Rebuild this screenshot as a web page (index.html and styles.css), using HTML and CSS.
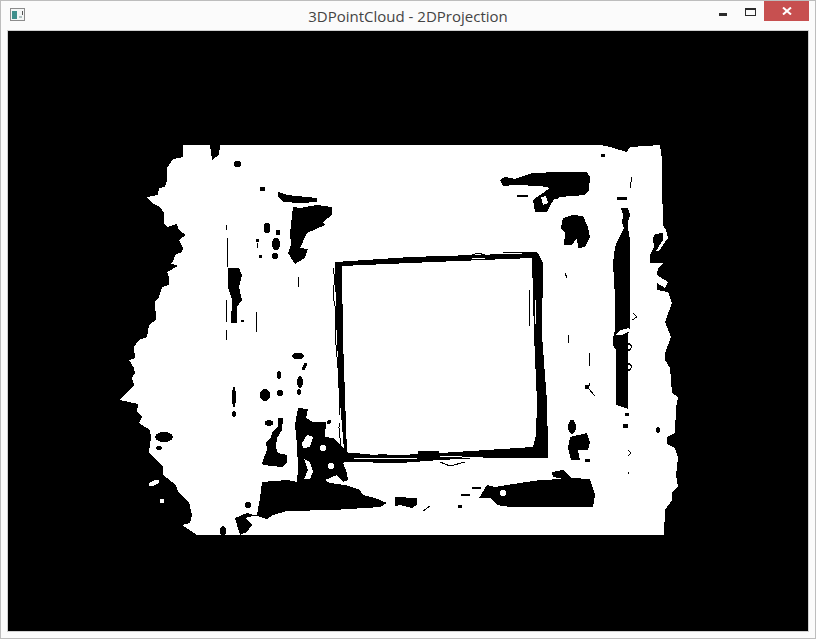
FILE: index.html
```html
<!DOCTYPE html>
<html lang="en">
<head>
    <meta charset="UTF-8">
    <meta name="viewport" content="width=device-width, initial-scale=1.0">
    <title>3DPointCloud - 2DProjection</title>
    <link rel="stylesheet" href="styles.css">
</head>
<body>
    <div class="window">
        <div class="titlebar">
            <svg class="app-icon" width="16" height="14" viewBox="0 0 16 14">
                <rect x="0.5" y="0.5" width="14" height="12" fill="#f4f6f6" stroke="#8c8c8c"/>
                <rect x="2" y="3" width="5" height="8" fill="#3f8f8c"/>
                <rect x="9" y="8" width="3" height="2" fill="#b5c4c4"/>
                <rect x="12" y="3" width="1" height="4" fill="#555"/>
            </svg>
            <div class="title">3DPointCloud - 2DProjection</div>
            <div class="controls">
                <div class="btn-min"></div>
                <div class="btn-max"></div>
                <div class="btn-close">
                    <svg width="10" height="8" viewBox="0 0 10 8">
                        <path d="M1 0.5 L9 7.5 M9 0.5 L1 7.5" stroke="#fff" stroke-width="2" fill="none"/>
                    </svg>
                </div>
            </div>
        </div>
        <div class="canvas-wrap">
            <!-- drawn in screen coordinates so it lines up with the capture -->
            <svg class="projection" width="800" height="600" viewBox="8 31 800 600">
                <rect class="bg" x="8" y="31" width="800" height="600"/>
                <!-- point cloud outline -->
                <polygon class="on" points="183,145 183,157 173,159 167,168 167,180 165,187 159,188 158,195 147,197 152,203 160,207 164,213 164,223 167,227 177,224 179,230 186,235 179,240 183,248 182,252 175,255 173,262 170,263 178,266 167,272 169,277 169,285 162,287 159,297 155,302 156,320 149,325 147,337 139,340 134,347 135,358 129,360 134,368 135,373 132,378 134,385 120,400 138,404 137,412 142,417 139,423 150,430 151,438 149,452 163,467 163,475 176,485 178,492 189,502 192,515 190,523 182,525 197,535 664,535 665,510 672,500 672,492 678,487 676,475 678,458 675,448 667,444 667,437 675,433 676,408 678,397 672,393 670,368 665,360 665,353 671,337 665,322 672,303 668,292 657,290 657,283 665,288 668,282 657,275 658,268 663,263 650,263 650,255 654,247 653,238 655,234 663,233 663,240 656,251 659,251 663,245 668,238 666,230 663,225 663,217 662,190 662,160 660,145 630,147 627,152 610,147 600,145"/>
                <circle class="on" cx="162" cy="501" r="2.5"/>
                <ellipse class="on" cx="154" cy="483" rx="6" ry="2.5" transform="rotate(-25 154 483)"/>

                <!-- square frame in the middle -->
                <path class="off" fill-rule="evenodd" d="M335 262 L410 257 L538 253 L543 263 L542 335 L547 402 L548 448 L548 458 L480 458 L440 460 L400 463 L345 462 L340 402 L336 320 Z M342 266 L410 263 L532 258 L534 335 L537 402 L536 435 L533 447 L440 453 L400 455 L347 453 L343 340 Z"/>
                <rect class="off" x="418" y="451" width="21" height="9"/>

                <!-- holes, top left -->
                <polygon class="off" points="210,145 220,145 219,155 212,160"/>
                <ellipse class="off" cx="237.5" cy="164" rx="4" ry="3"/>
                <rect class="off" x="260" y="187" width="5" height="4"/>
                <polygon class="off" points="278,192 287,195 317,198 317,202 300,203 283,202 278,197"/>
                <polygon class="off" points="293,207 300,208 317,205 332,207 332,215 323,222 325,225 307,233 300,248 308,249 305,258 295,264 288,253 291,245 290,233"/>
                <ellipse class="off" cx="267" cy="228" rx="3.5" ry="5.5"/>
                <rect class="off" x="276" y="230" width="4" height="5"/>
                <rect class="off" x="256" y="239" width="3" height="3"/>
                <ellipse class="off" cx="276" cy="244" rx="4" ry="6"/>
                <rect class="off" x="259" y="255" width="3" height="3"/>
                <ellipse class="off" cx="275" cy="256" rx="3" ry="3"/>
                <polygon class="off" points="228,268 239,268 242,275 239,287 242,300 237,307 237,323 231,323 232,300 228,287"/>
                <rect class="off" x="241" y="320" width="3" height="2"/>

                <!-- holes, top right -->
                <polygon class="off" points="500,180 505,177 515,179 532,173 560,172 587,172 590,177 589,190 585,195 560,197 552,202 547,212 535,212 533,200 540,195 550,188 540,186 515,185 503,186"/>
                <polygon class="on" points="541,197 546,196 548,203 543,205"/>
                <circle class="on" cx="555" cy="201" r="2"/>
                <rect class="off" x="517" y="195" width="11" height="2"/>
                <rect class="off" x="601" y="154" width="4" height="3"/>
                <rect class="off" x="617" y="197" width="10" height="3"/>
                <polygon class="off" points="563,218 573,215 583,216 588,227 590,237 585,247 578,248 577,238 572,245 564,245 565,233 561,228"/>
                <polygon class="off" points="621,208 628,208 630,215 628,222 628,228 630,240 630,327 628,335 628,409 616,405 616,350 613,345 613,338 615,330 615,297 613,263 615,247 618,240 624,228 622,223 623,215"/>
                <polygon class="on" points="615,335 621,330 629,328 630,331 622,335"/>
                <rect class="off" x="625" y="413" width="4" height="3"/>
                <rect class="off" x="623" y="424" width="5" height="4"/>
                <ellipse class="off" cx="658" cy="430" rx="2" ry="3"/>

                <!-- holes, bottom left -->
                <ellipse class="off" cx="298" cy="356" rx="6" ry="3.5"/>
                <line class="off-line thick" x1="306" y1="363" x2="303" y2="370"/>
                <ellipse class="off" cx="300" cy="382" rx="3" ry="6"/>
                <ellipse class="off" cx="299" cy="392" rx="2" ry="3"/>
                <ellipse class="off" cx="279" cy="375" rx="2" ry="4"/>
                <ellipse class="off" cx="280" cy="393" rx="3" ry="3"/>
                <ellipse class="off" cx="265" cy="395" rx="5" ry="6"/>
                <ellipse class="off" cx="234" cy="397" rx="2" ry="10"/>
                <ellipse class="off" cx="234" cy="414" rx="2" ry="3"/>
                <ellipse class="off" cx="269" cy="423" rx="4" ry="3"/>
                <polygon class="off" points="278,418 283,418 282,430 277,438 276,447 278,453 287,455 287,463 282,467 263,465 262,463 267,450 266,442 271,438 272,432 278,427"/>
                <ellipse class="off" cx="164" cy="437" rx="9" ry="5"/>
                <ellipse class="off" cx="159" cy="448" rx="3" ry="2"/>
                <polygon class="off" points="298,408 308,409 306,418 313,422 326,422 325,437 333,438 347,452 354,457 343,463 347,473 348,480 343,482 337,475 325,480 330,483 345,485 360,490 363,495 375,498 387,503 380,507 365,508 333,510 287,511 273,515 267,519 247,513 235,518 240,535 247,532 252,525 245,518 257,515 260,498 262,482 287,480 297,482 298,468 297,445 295,425"/>
                <polygon class="on" points="302,443 307,435 313,437 310,447 303,448"/>
                <circle class="on" cx="323" cy="448" r="3"/>
                <polygon class="on" points="304,459 310,462 313,472 310,479 304,479 308,470"/>
                <circle class="on" cx="331" cy="466" r="3"/>
                <circle class="off" cx="329" cy="422" r="2"/>
                <circle class="off" cx="248" cy="505" r="3"/>
                <ellipse class="off" cx="223" cy="531" rx="3" ry="5"/>
                <polygon class="off" points="395,497 417,498 417,505 412,508 400,505 395,506"/>

                <!-- holes, bottom right -->
                <circle class="off" cx="587" cy="387" r="2.5"/>
                <ellipse class="off" cx="572" cy="427" rx="4" ry="7"/>
                <polygon class="off" points="570,437 587,433 590,442 588,450 578,450 580,460 571,460 568,448"/>
                <rect class="off" x="585" y="459" width="5" height="3"/>
                <polygon class="off" points="552,472 563,470 572,478 590,479 595,495 593,507 510,507 497,505 490,498 479,498 487,485 495,487 507,485 540,480 563,479 553,477"/>
                <circle class="on" cx="503" cy="493" r="3"/>
                <rect class="off" x="472" y="487" width="9" height="2"/>
                <rect class="off" x="461" y="494" width="9" height="2"/>
                <rect class="off" x="458" y="505" width="4" height="3"/>

                <!-- thin contour lines -->
                <polyline class="off-line" points="226,225 227,230"/>
                <polyline class="off-line" points="228,238 227,247 228,252 227,267"/>
                <polyline class="off-line" points="227,300 226,323"/>
                <polyline class="off-line" points="227,330 226,340"/>
                <polyline class="off-line" points="257,312 256,322 257,332"/>
                <polyline class="off-line" points="257,243 257,248"/>
                <polyline class="off-line" points="299,277 298,287"/>
                <polyline class="off-line" points="333,268 335,280 333,290 333,297 336,310 335,320 336,345 338,368 339,388 340,402 339,428 341,448"/>
                <polyline class="off-line" points="503,253 517,252 537,252"/>
                <polyline class="off-line" points="472,255 478,253 485,255"/>
                <polyline class="off-line" points="530,290 529,327"/>
                <polyline class="off-line" points="440,462 450,466 465,462"/>
                <polyline class="off-line" points="589,353 590,366"/>
                <polyline class="off-line" points="590,383 588,388 595,396"/>
                <polyline class="off-line" points="568,335 569,343"/>
                <polyline class="off-line" points="565,273 567,278"/>
                <polyline class="off-line" points="423,511 430,506"/>
                <polyline class="off-line" points="629,343 632,347 629,351 627,347 629,343"/>
                <polyline class="off-line" points="629,363 632,367 629,371 627,367 629,363"/>
                <polyline class="off-line" points="628,450 631,453 628,456"/>
                <polyline class="off-line" points="628,472 629,474"/>
                <polyline class="off-line" points="632,177 630,188"/>
                <polyline class="off-line" points="633,313 637,317 632,320"/>
                <polyline class="on-line" points="472,258 485,258"/>
                <polyline class="on-line" points="400,458 417,458"/>
                <polyline class="on-line" points="440,456 483,458"/>
                <polyline class="on-line" points="353,458 400,459"/>
                <polyline class="on-line" points="370,455 378,454"/>
                <polyline class="on-line" points="339,415 342,438"/>
                <polyline class="on-line" points="536,300 535,325"/>
            </svg>
        </div>
    </div>
</body>
</html>
```

FILE: styles.css
```css
html, body {
    margin: 0;
    height: 100%;
}
.window {
    box-sizing: border-box;
    width: 816px;
    height: 639px;
    background-color: #fbfbfb;
    border: 1px solid #bdbdbd;
    display: flex;
    flex-direction: column;
}
.titlebar {
    position: relative;
    height: 29px;
    display: flex;
    align-items: flex-start;
    justify-content: center;
}
.app-icon {
    position: absolute;
    left: 9px;
    top: 7px;
}
.title {
    margin-top: 5px;
    font-family: "Open Sans", sans-serif;
    font-size: 15px;
    line-height: 20px;
    color: #444444;
}
.controls {
    position: absolute;
    right: 6px;
    top: 0;
    display: flex;
}
.btn-min {
    width: 8px;
    height: 3px;
    margin-top: 12px;
    background-color: #2b2b2b;
}
.btn-max {
    box-sizing: border-box;
    width: 11px;
    height: 8px;
    margin: 7px 8px 0 18px;
    border: 1px solid #2b2b2b;
    border-top-width: 2px;
}
.btn-close {
    width: 45px;
    height: 20px;
    background-color: #c75050;
    display: flex;
    align-items: center;
    justify-content: center;
}
.canvas-wrap {
    align-self: center;
    width: 800px;
    height: 600px;
    margin-top: 1px;
    outline: 1px solid #d0d0d0;
}
.projection {
    display: block;
    shape-rendering: crispEdges;
}
.bg, .off {
    fill: #000;
}
.on {
    fill: #fff;
}
.off-line, .on-line {
    fill: none;
    stroke-width: 1;
}
.off-line {
    stroke: #000;
}
.off-line.thick {
    stroke-width: 3;
}
.on-line {
    stroke: #fff;
}
```
